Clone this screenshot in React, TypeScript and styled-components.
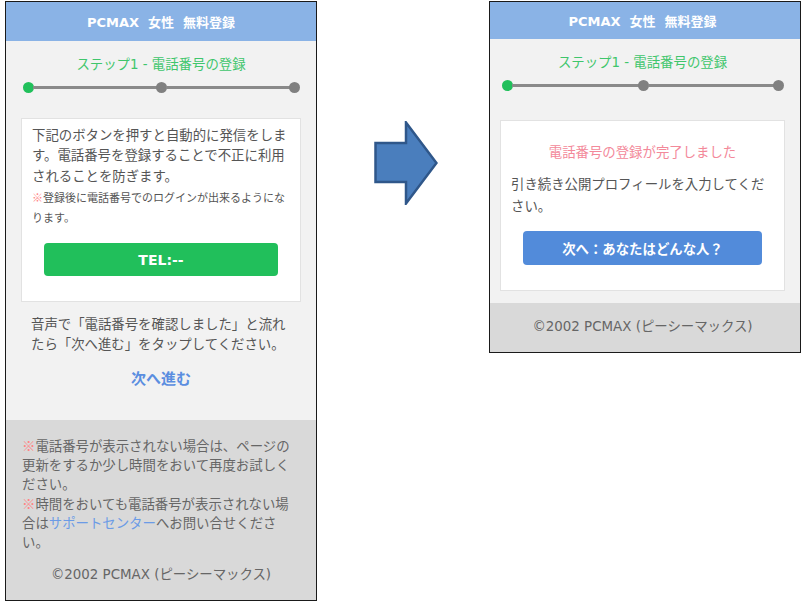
import React from "react";
import styled, { createGlobalStyle } from "styled-components";

const GlobalStyle = createGlobalStyle`
  html, body {
    margin: 0;
    background: #fff;
  }
  body {
    font-family: "DejaVu Sans", "Noto Sans CJK JP", sans-serif;
    color: #555;
  }
`

type StepProps = {
  total: number
  current: number
}

function StepBar({ total, current }: StepProps) {
  const items: React.ReactNode[] = []
  for (let i = 0; i < total; i++) {
    if (i > 0) items.push(<StepLine key={`l${i}`} />)
    items.push(<StepDot key={`d${i}`} $active={i <= current} />)
  }
  return <Steps>{items}</Steps>
}

function FlowArrow() {
  return (
    <ArrowBox>
      <svg width="64" height="84" viewBox="0 0 64 84">
        <polygon
          points="1.5,22 32,22 32,1.5 62.5,42 32,82.5 32,61 1.5,61"
          fill="#4a7ebd"
          stroke="#2f578a"
          strokeWidth="2.5"
          strokeLinejoin="miter"
        />
      </svg>
    </ArrowBox>
  )
}

export default function App() {
  return <Canvas>
    <GlobalStyle />

    <Phone $height={600}>
      <Header>PCMAX&nbsp; 女性&nbsp; 無料登録</Header>
      <Body $gutter={15} $bottom={31}>
        <StepTitle>ステップ1 - 電話番号の登録</StepTitle>
        <StepBar total={3} current={0} />
        <Card $top={7} $bottom={25} $offset={1}>
          <CardText>
            下記のボタンを押すと自動的に発信をします。電話番号を登録することで不正に利用されることを防ぎます。
          </CardText>
          <Note><Mark>※</Mark>登録後に電話番号でのログインが出来るようになります。</Note>
          <ActionButton $tone="green">TEL:--</ActionButton>
        </Card>
        <Guide>
          音声で「電話番号を確認しました」と流れたら「次へ進む」をタップしてください。
        </Guide>
        <NextLink href="#">次へ進む</NextLink>
      </Body>
      <Footer $grow>
        <FooterText>
          <Mark>※</Mark>電話番号が表示されない場合は、ページの更新をするか少し時間をおいて再度お試しください。<br />
          <Mark>※</Mark>時間をおいても電話番号が表示されない場合は<SupportLink href="#">サポートセンター</SupportLink>へお問い合せください。
        </FooterText>
        <Copyright>©2002 PCMAX (ピーシーマックス)</Copyright>
      </Footer>
    </Phone>

    <FlowArrow />

    <Phone $height={352} style={{ ["--shift" as string]: "5px" }}>
      <Header>PCMAX&nbsp; 女性&nbsp; 無料登録</Header>
      <Body $gutter={10} $bottom={12}>
        <StepTitle>ステップ1 - 電話番号の登録</StepTitle>
        <StepBar total={3} current={0} />
        <Card $top={22} $bottom={25} $offset={5}>
          <Done>電話番号の登録が完了しました</Done>
          <CardText $spaced>引き続き公開プロフィールを入力してください。</CardText>
          <ActionButton $tone="blue">次へ：あなたはどんな人？</ActionButton>
        </Card>
      </Body>
      <Footer>
        <Copyright $flush>©2002 PCMAX (ピーシーマックス)</Copyright>
      </Footer>
    </Phone>
  </Canvas>
}

const Canvas = styled.div`
  display: flex;
  align-items: flex-start;
  padding: 1px 0 0 5px;
`

const Phone = styled.div<{ $height: number }>`
  width: 312px;
  height: ${p => p.$height}px;
  box-sizing: border-box;
  border: 1px solid #1a1a1a;
  background: #f2f2f2;
  display: flex;
  flex-direction: column;
  flex-shrink: 0;
`

const Header = styled.div`
  height: 39px;
  background: #8ab3e6;
  color: #fff;
  font-size: 13px;
  font-weight: bold;
  display: flex;
  align-items: center;
  justify-content: center;
  padding-right: var(--shift, 0px);
  white-space: nowrap;
`

const Body = styled.div<{ $gutter: number, $bottom: number }>`
  display: flex;
  flex-direction: column;
  padding: 14px calc(${p => p.$gutter}px + var(--shift, 0px)) ${p => p.$bottom}px ${p => p.$gutter}px;
`

const StepTitle = styled.div`
  text-align: center;
  color: #3fc66c;
  font-size: 13.4px;
  line-height: 20px;
`

const Steps = styled.div`
  display: flex;
  align-items: center;
  margin-top: 7px;
  padding: 0 1px 0 2px;
`

const StepDot = styled.span<{ $active: boolean }>`
  width: 11px;
  height: 11px;
  border-radius: 50%;
  flex-shrink: 0;
  background: ${p => p.$active ? '#21c05b' : '#808080'};
`

const StepLine = styled.span`
  flex: 1;
  height: 3px;
  background: #8a8a8a;
  margin: 0 -1px;
`

const Card = styled.div<{ $top: number, $bottom: number, $offset?: number }>`
  margin-top: ${p => 24 + (p.$offset ?? 0)}px;
  background: #fff;
  border: 1px solid #e2e2e2;
  padding: ${p => p.$top}px 10px ${p => p.$bottom}px;
  display: flex;
  flex-direction: column;
`

const CardText = styled.div<{ $spaced?: boolean }>`
  font-size: 13.4px;
  line-height: ${p => p.$spaced ? 21.5 : 20.5}px;
  color: #555;
  margin-top: ${p => p.$spaced ? 11 : 0}px;
`

const Note = styled.div`
  font-size: 11px;
  line-height: 20px;
  color: #555;
`

const Mark = styled.span`
  font-family: "Noto Sans CJK JP", sans-serif;
  color: #ff8585;
`

const ActionButton = styled.button<{ $tone: 'green' | 'blue' }>`
  margin: 14px 12px 0;
  height: ${p => p.$tone === 'green' ? 33 : 34}px;
  border: none;
  border-radius: 4px;
  background: ${p => p.$tone === 'green' ? '#21bf5b' : '#528bda'};
  color: #fff;
  font-family: inherit;
  font-size: ${p => p.$tone === 'green' ? 14 : 13.4}px;
  font-weight: bold;
  cursor: pointer;
`

const Done = styled.div`
  text-align: center;
  color: #f3899a;
  font-size: 13.4px;
  line-height: 20px;
`

const Guide = styled.div`
  margin-top: 13px;
  padding: 0 10px;
  font-size: 13.4px;
  line-height: 20px;
  color: #555;
`

const NextLink = styled.a`
  margin-top: 14px;
  align-self: center;
  color: #5b8ee0;
  font-size: 15px;
  line-height: 20px;
  font-weight: bold;
  text-decoration: none;
`

const Footer = styled.div<{ $grow?: boolean }>`
  ${p => p.$grow ? 'flex: 1;' : ''}
  background: #d9d9d9;
  padding: 16px calc(16px + var(--shift, 0px)) 16px 16px;
  display: flex;
  flex-direction: column;
`

const FooterText = styled.div`
  font-size: 13.4px;
  line-height: 19px;
  color: #666;
`

const SupportLink = styled.a`
  color: #6b9be6;
  text-decoration: none;
`

const Copyright = styled.div<{ $flush?: boolean }>`
  margin-top: ${p => p.$flush ? -2 : 13}px;
  text-align: center;
  font-size: 13.4px;
  line-height: 19px;
  color: #666;
  white-space: nowrap;
`

const ArrowBox = styled.div`
  margin: 120px 0 0 57px;
  width: 64px;
  height: 84px;
  margin-right: 51px;
  flex-shrink: 0;
`
